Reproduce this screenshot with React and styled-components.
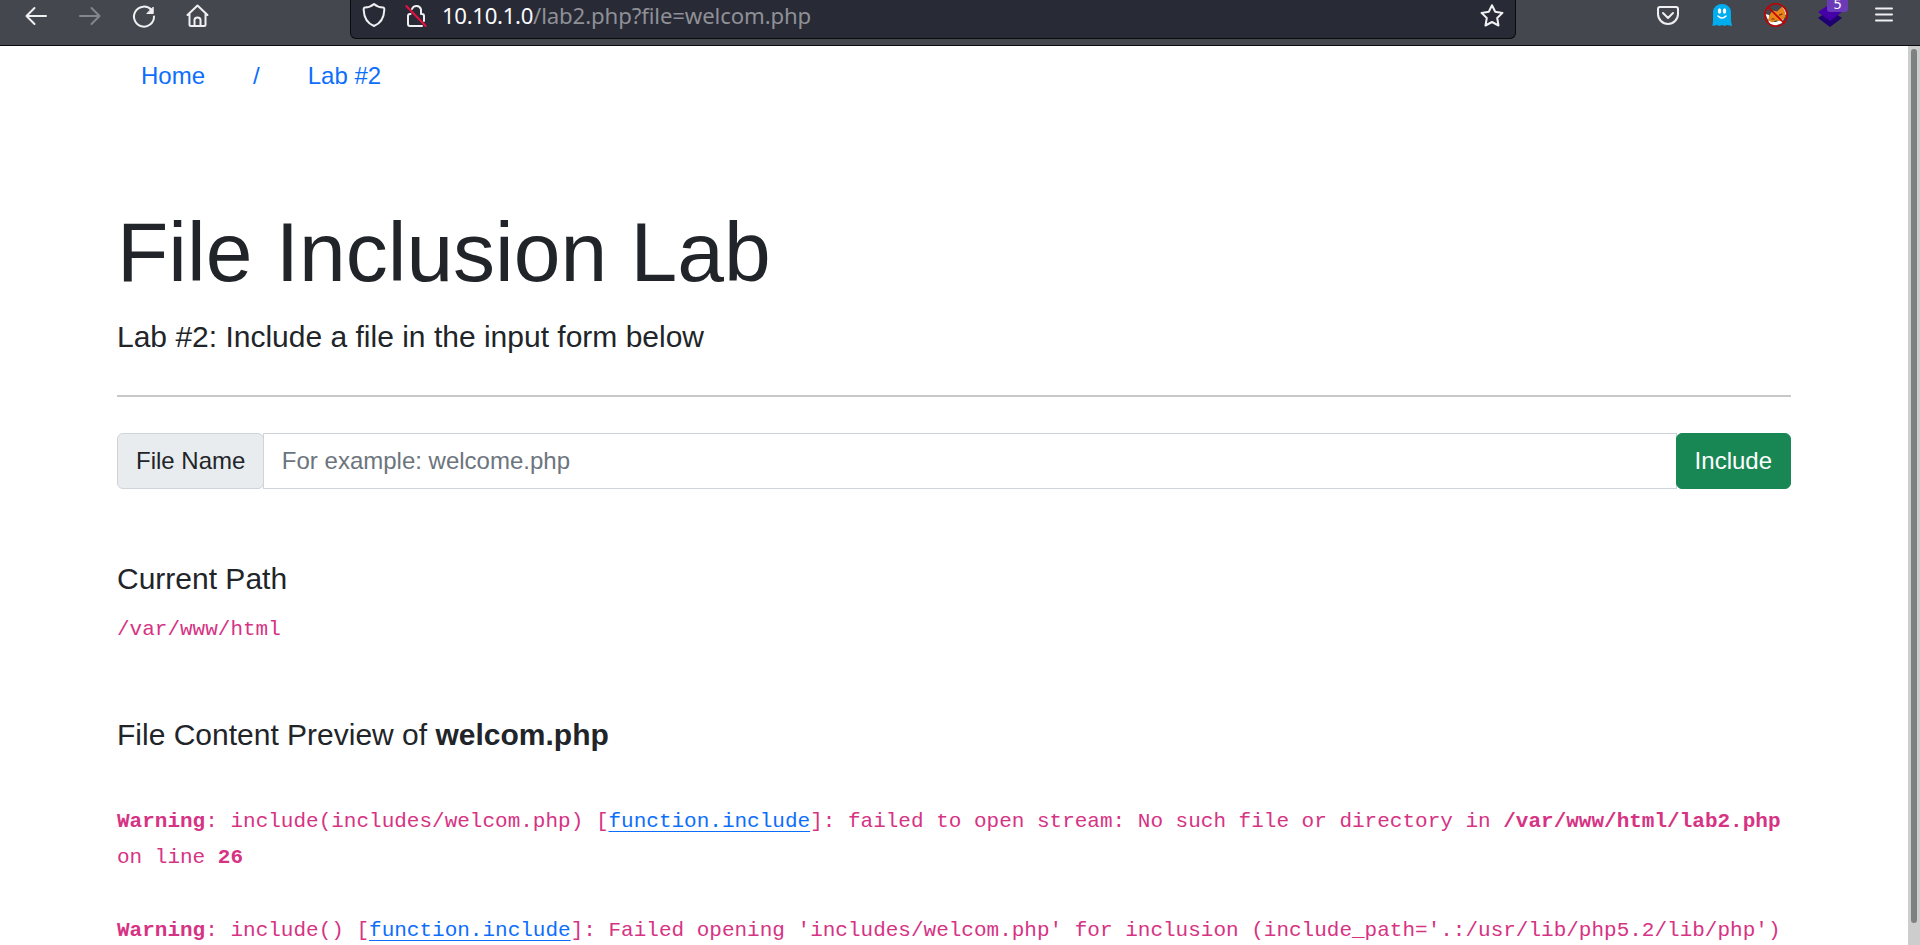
import React from "react";
import styled, { createGlobalStyle } from "styled-components";

const Global = createGlobalStyle`
  *, *::before, *::after { box-sizing: border-box; }
  html, body { margin: 0; height: 100%; overflow: hidden; background: #fff; }
  body {
    font-family: "Liberation Sans", Arial, sans-serif;
    font-size: 24px;
    line-height: 1.5;
    color: #212529;
  }
`;

const Window = styled.div`
  display: flex;
  flex-direction: column;
  height: 945px;
  overflow: hidden;
`;

const Toolbar = styled.header`
  display: flex;
  align-items: flex-start;
  flex: none;
  height: 46px;
  background: #45474e;
  border-bottom: 1px solid #0c0c0d;
`;

const NavButtons = styled.div`
  display: flex;
  gap: 30px;
  width: 350px;
  padding: 4px 0 0 24px;
`;

const Icon = styled.svg`
  display: block;
  flex: none;
  width: 24px;
  height: 24px;
  fill: none;
  stroke: ${(p) => p.$color || "#f0f0f2"};
  stroke-width: 2;
  stroke-linecap: round;
  stroke-linejoin: round;
  overflow: visible;
`;

const UrlBar = styled.div`
  display: flex;
  align-items: flex-start;
  width: 1166px;
  height: 39px;
  padding: 4px 11px 0 11px;
  background: #282a36;
  border: 1px solid #0c0c0d;
  border-top: 0;
  border-radius: 0 0 6px 6px;
`;

const Address = styled.div`
  flex: 1;
  margin: -4px 0 0 13px;
  font: 22.2px/32px "Noto Sans", sans-serif;
  letter-spacing: -0.12px;
  color: #8f9096;
  white-space: nowrap;
`;

const Host = styled.span`
  letter-spacing: -0.33px;
  color: #fbfbfe;
`;

const LockIcon = styled(Icon)`
  margin-left: 19px;
`;

const Extensions = styled.div`
  display: flex;
  gap: 30px;
  margin-left: 140px;
  padding-top: 3px;
`;

const BadgedIcon = styled.div`
  position: relative;
`;

const Badge = styled.span`
  position: absolute;
  left: 9px;
  top: -3px;
  width: 21px;
  height: 12px;
  border-radius: 0 0 3px 3px;
  background: #6a3ab9;
  color: #fff;
  font: 14px/8px "Noto Sans", sans-serif;
  text-align: center;
`;

const Viewport = styled.div`
  display: flex;
  flex: 1;
  min-height: 0;
`;

const Page = styled.main`
  flex: 1;
  padding: 12px 117px 0;
  overflow: hidden;
`;

const ScrollTrack = styled.div`
  flex: none;
  width: 12px;
  padding: 3px 3px 0;
  background: #cdcdcd;
`;

const ScrollThumb = styled.div`
  width: 6px;
  height: 874px;
  border-radius: 3px;
  background: #7d8180;
`;

const Breadcrumb = styled.nav`
  display: flex;
`;

const NavLink = styled.a`
  padding: 0 24px;
  color: #0d6efd;
`;

const Title = styled.h1`
  margin: 108px 0 16px;
  font-size: 84px;
  font-weight: 400;
  line-height: 101px;
`;

const Heading = styled.h5`
  margin: 0 0 ${(p) => p.$gap || 12}px;
  font-size: 30px;
  font-weight: 400;
  line-height: 36px;
`;

const Rule = styled.hr`
  height: 2px;
  margin: 0 0 36px;
  border: 0;
  background: #c7c8c9;
`;

const InputGroup = styled.form`
  display: flex;
  height: 56px;
  margin-bottom: 72px;
`;

const Label = styled.span`
  padding: 9px 18px;
  background: #e9ecef;
  border: 1px solid #ced4da;
  border-radius: 6px;
`;

const Field = styled.input`
  flex: 1;
  min-width: 0;
  margin: 0 -1px;
  padding: 9px 18px 9px 17.5px;
  border: 1px solid #ced4da;
  font: inherit;
  color: #212529;
  outline: 0;
  &::placeholder { color: #6c757d; opacity: 1; }
`;

const Submit = styled.button`
  position: relative;
  padding: 9px 18px;
  background: #198754;
  border: 1px solid #198754;
  border-radius: 6px;
  color: #fff;
  font: inherit;
`;

const Section = styled.section`
  margin-bottom: 71px;
`;

const Code = styled.code`
  font-family: "Liberation Mono", monospace;
  font-size: 21px;
  color: #d63384;
  a {
    color: #0d6efd;
    text-decoration: underline;
    text-decoration-thickness: 1px;
    text-decoration-skip-ink: none;
    text-underline-offset: 4px;
  }
`;

const Warnings = styled.div`
  padding-top: 36px;
  white-space: nowrap;
`;

const Warning = styled.p`
  margin: 0 0 36px;
`;

export default function App() {
  return (
    <>
      <Global />
      <Window>
        <Toolbar>
          <NavButtons>
            <Icon viewBox="0 0 24 24"><path d="M22 12H2.500M10.500 4L2.500 12L10.500 20" /></Icon>
            <Icon viewBox="0 0 24 24" $color="#85868b"><path d="M2 12H21.500M13.500 4L21.500 12L13.500 20" /></Icon>
            <Icon viewBox="0 0 24 24"><path d="M19.500 6A10 10 0 1 0 22 12.500" /><path d="M21.200 3.500V9.500H15.200Z" fill="#f0f0f2" strokeWidth="1" /></Icon>
            <Icon viewBox="0 0 24 24"><path d="M1.500 11L11.500 1.500L21.500 11M3.500 9.500V20.500Q3.500 22 5 22H18Q19.500 22 19.500 20.500V9.500M8.500 22V16Q8.500 13.500 11.500 13.500T14.500 16V22" /></Icon>
          </NavButtons>
          <UrlBar>
            <Icon viewBox="0 0 24 24"><path d="M12 0Q16 3.500 21 3.500Q22.500 3.500 22.300 6C22 14 19.500 19 12 22C4.500 19 2 14 1.700 6Q1.500 3.500 3 3.500Q8 3.500 12 0Z" /></Icon>
            <LockIcon viewBox="0 0 24 24">
              <path d="M7 5A4.700 4.700 0 0 1 16 5.500V10H17Q19 10 19 12V17M5.500 10H5Q3 10 3 12V20Q3 22 5 22H17" />
              <path d="M1.300 2L20.700 22" stroke="#e7103f" />
            </LockIcon>
            <Address><Host>10.10.1.0</Host>/lab2.php?file=welcom.php</Address>
            <Icon viewBox="0 0 24 24"><path d="M12 1.200L15.200 7.800L22.500 8.900L17.200 14L18.500 21.500L12 18L5.500 21.500L6.800 14L1.500 8.900L8.800 7.800Z" /></Icon>
          </UrlBar>
          <Extensions>
            <Icon viewBox="0 0 24 24"><path d="M4 4H20Q22 4 22 6V11A10 10 0 0 1 2 11V6Q2 4 4 4ZM7 10L12 15L17 10" /></Icon>
            <Icon viewBox="0 0 24 24" $color="none">
              <path d="M3 9A9 8 0 0 1 21 9V18L22 23L17 22L14.500 23L12 22L9.500 23L7 22L2.500 23L3 18Z" fill="#00aef0" />
              <ellipse cx="9.500" cy="8" rx="1.700" ry="2.800" fill="#fff" /><ellipse cx="14.500" cy="8" rx="1.700" ry="2.800" fill="#fff" />
              <path d="M8 13Q12 17 16 13" stroke="#fff" strokeWidth="1.500" />
            </Icon>
            <Icon viewBox="0 0 24 24" $color="none">
              <path d="M1.500 11L5 12L6 17L3.500 16ZM4 17L8 19L12 19L20 15L18 20L12 22.500L6 21ZM18 3.500L21 7L22.500 12L20 11Z" fill="#fff" />
              <path d="M5 13L8.500 7.500L13 8.500L18.500 3.500L21 9L21.500 14L17 18L12 17.500L8 19.500L4.500 17Z" fill="#ec8419" />
              <path d="M15.500 12L18 11M8 16L10 16" stroke="#5a3010" strokeWidth="1.200" />
              <circle cx="12" cy="12" r="11.200" stroke="#c40000" strokeWidth="1.500" /><path d="M4 4L20 20" stroke="#c40000" strokeWidth="1.600" />
            </Icon>
            <BadgedIcon>
              <Icon viewBox="0 0 24 24" $color="none"><path d="M0 15L12 7L24 15L12 24Z" fill="#1e0070" /><path d="M0 9L12 1L24 9L12 18Z" fill="#4500a8" /></Icon>
              <Badge>5</Badge>
            </BadgedIcon>
            <Icon viewBox="0 0 24 24"><path d="M4 5.500H20M4 11.500H20M4 17.500H20" /></Icon>
          </Extensions>
        </Toolbar>
        <Viewport>
          <Page>
            <Breadcrumb>
              <NavLink>Home</NavLink>
              <NavLink>/</NavLink>
              <NavLink>Lab #2</NavLink>
            </Breadcrumb>
            <Title>File Inclusion Lab</Title>
            <Heading $gap={40}>Lab #2: Include a file in the input form below</Heading>
            <Rule />
            <InputGroup>
              <Label>File Name</Label>
              <Field placeholder="For example: welcome.php" />
              <Submit type="button">Include</Submit>
            </InputGroup>
            <Section>
              <Heading>Current Path</Heading>
              <Code>/var/www/html</Code>
            </Section>
            <Section>
              <Heading>File Content Preview of <b>welcom.php</b></Heading>
              <Warnings>
                <Warning>
                  <Code>
                    <b>Warning</b>: include(includes/welcom.php) [<a href="#function.include">function.include</a>]: failed to open stream: No such file or directory in <b>/var/www/html/lab2.php</b><br />
                    on line <b>26</b>
                  </Code>
                </Warning>
                <Warning>
                  <Code>
                    <b>Warning</b>: include() [<a href="#function.include">function.include</a>]: Failed opening 'includes/welcom.php' for inclusion (include_path='.:/usr/lib/php5.2/lib/php')
                  </Code>
                </Warning>
              </Warnings>
            </Section>
          </Page>
          <ScrollTrack><ScrollThumb /></ScrollTrack>
        </Viewport>
      </Window>
    </>
  );
}
